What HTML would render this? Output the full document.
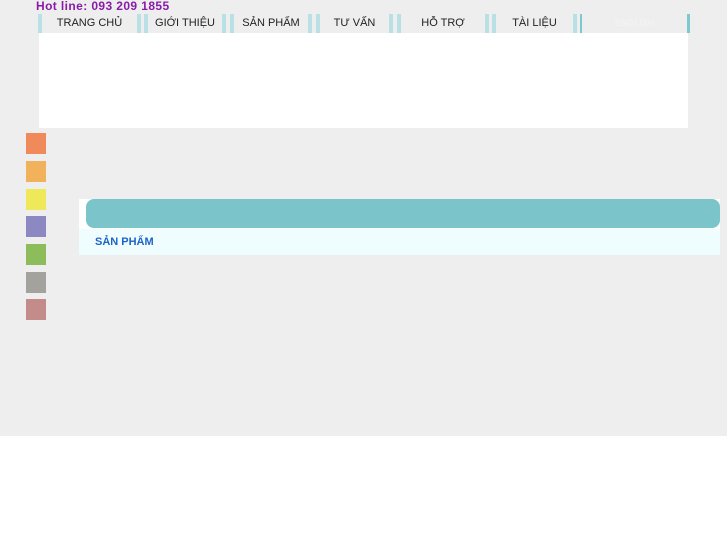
<!DOCTYPE html>
<html><head><meta charset="utf-8"><style>
*{margin:0;padding:0;box-sizing:border-box}
body{width:727px;height:545px;background:#fff;position:relative;overflow:hidden;font-family:"Liberation Sans",sans-serif}
.bg{position:absolute;left:0;top:0;width:727px;height:436px;background:#eeeeee}
.hot{position:absolute;left:36px;top:-1px;font-size:12px;font-weight:bold;color:#8a1aa8;letter-spacing:0.4px}
.m{position:absolute;top:14px;height:19px;font-size:11px;color:#222;text-align:center;line-height:18px;border-left:4px solid #b9e0e5;border-right:4px solid #b9e0e5}
.white{position:absolute;left:39px;top:33px;width:649px;height:95px;background:#fff}
.sq{position:absolute;left:26px;width:20px;height:21px}
.panel{position:absolute;left:79px;top:199px;width:641px;height:56px;background:#f0fdfe}
.bar{position:absolute;left:86px;top:199px;width:634px;height:29px;background:#7ac4ca;border-radius:8px}
.panel-top{position:absolute;left:79px;top:199px;width:641px;height:30px;background:#fff}
.sp{position:absolute;left:95px;top:236px;font-size:11px;font-weight:bold;color:#1b63c8}
</style></head><body>
<div class="bg"></div>
<div class="hot">Hot line: 093 209 1855</div>
<div class="m" style="left:38px;width:103px">TRANG CHỦ</div>
<div class="m" style="left:144px;width:82px">GIỚI THIỆU</div>
<div class="m" style="left:230px;width:82px">SẢN PHẨM</div>
<div class="m" style="left:316px;width:77px">TƯ VẤN</div>
<div class="m" style="left:397px;width:92px">HỖ TRỢ</div>
<div class="m" style="left:492px;width:85px">TÀI LIỆU</div>
<div class="m" style="left:580px;width:110px;color:#f4f4f4;font-size:9px;border-left:2px solid #7ccad0;border-right:3px solid #7ccad0">ENGLISH</div>
<div class="white"></div>
<div class="sq" style="top:133px;background:#f08a5a"></div>
<div class="sq" style="top:161px;background:#f2b25c"></div>
<div class="sq" style="top:189px;background:#efe95a"></div>
<div class="sq" style="top:216px;background:#8b88c2"></div>
<div class="sq" style="top:244px;background:#8dbd5a"></div>
<div class="sq" style="top:272px;background:#a3a29d"></div>
<div class="sq" style="top:299px;background:#c48b8b"></div>
<div class="panel"></div>
<div class="panel-top"></div>
<div class="bar"></div>
<div class="sp">SẢN PHẨM</div>
</body></html>
